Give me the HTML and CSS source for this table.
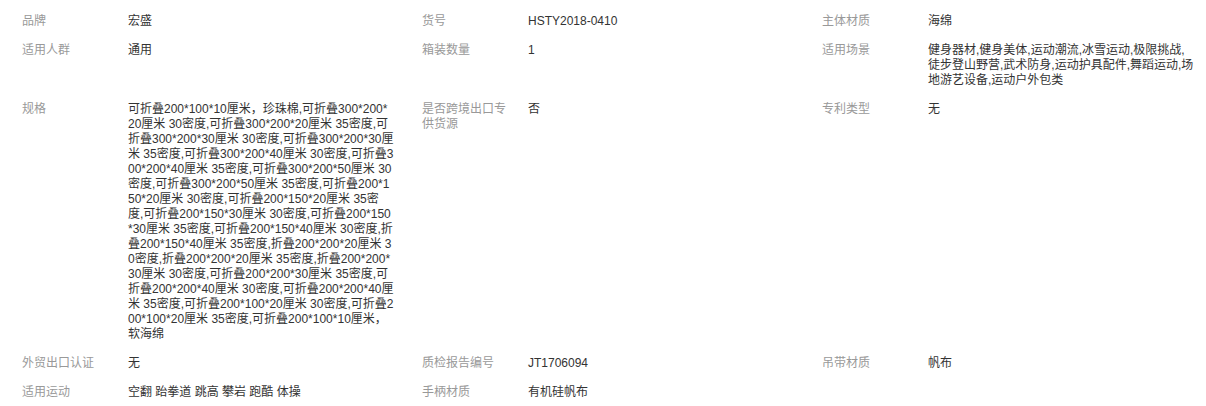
FILE: index.html
```html
<!DOCTYPE html>
<html lang="zh-CN">
<head>
    <meta charset="UTF-8">
    <meta name="viewport" content="width=device-width, initial-scale=1.0">
    <title>商品属性</title>
    <link rel="stylesheet" href="styles.css">
</head>
<body>
    <div class="attr-table">
        <div class="attr-item">
            <div class="attr-name">品牌</div>
            <div class="attr-value">宏盛</div>
        </div>
        <div class="attr-item">
            <div class="attr-name">货号</div>
            <div class="attr-value">HSTY2018-0410</div>
        </div>
        <div class="attr-item">
            <div class="attr-name">主体材质</div>
            <div class="attr-value">海绵</div>
        </div>

        <div class="attr-item">
            <div class="attr-name">适用人群</div>
            <div class="attr-value">通用</div>
        </div>
        <div class="attr-item">
            <div class="attr-name">箱装数量</div>
            <div class="attr-value">1</div>
        </div>
        <div class="attr-item">
            <div class="attr-name">适用场景</div>
            <div class="attr-value">健身器材,健身美体,运动潮流,冰雪运动,极限挑战,徒步登山野营,武术防身,运动护具配件,舞蹈运动,场地游艺设备,运动户外包类</div>
        </div>

        <div class="attr-item">
            <div class="attr-name">规格</div>
            <div class="attr-value">可折叠200*100*10厘米，珍珠棉,可折叠300*200*20厘米 30密度,可折叠300*200*20厘米 35密度,可折叠300*200*30厘米 30密度,可折叠300*200*30厘米 35密度,可折叠300*200*40厘米 30密度,可折叠300*200*40厘米 35密度,可折叠300*200*50厘米 30密度,可折叠300*200*50厘米 35密度,可折叠200*150*20厘米 30密度,可折叠200*150*20厘米 35密度,可折叠200*150*30厘米 30密度,可折叠200*150*30厘米 35密度,可折叠200*150*40厘米 30密度,折叠200*150*40厘米 35密度,折叠200*200*20厘米 30密度,折叠200*200*20厘米 35密度,折叠200*200*30厘米 30密度,可折叠200*200*30厘米 35密度,可折叠200*200*40厘米 30密度,可折叠200*200*40厘米 35密度,可折叠200*100*20厘米 30密度,可折叠200*100*20厘米 35密度,可折叠200*100*10厘米，软海绵</div>
        </div>
        <div class="attr-item">
            <div class="attr-name">是否跨境出口专供货源</div>
            <div class="attr-value">否</div>
        </div>
        <div class="attr-item">
            <div class="attr-name">专利类型</div>
            <div class="attr-value">无</div>
        </div>

        <div class="attr-item">
            <div class="attr-name">外贸出口认证</div>
            <div class="attr-value">无</div>
        </div>
        <div class="attr-item">
            <div class="attr-name">质检报告编号</div>
            <div class="attr-value">JT1706094</div>
        </div>
        <div class="attr-item">
            <div class="attr-name">吊带材质</div>
            <div class="attr-value">帆布</div>
        </div>

        <div class="attr-item">
            <div class="attr-name">适用运动</div>
            <div class="attr-value">空翻 跆拳道 跳高 攀岩 跑酷 体操</div>
        </div>
        <div class="attr-item">
            <div class="attr-name">手柄材质</div>
            <div class="attr-value">有机硅帆布</div>
        </div>
    </div>
</body>
</html>
```

FILE: styles.css
```css
body {
    margin: 0;
    background: #fff;
    font-family: 'Liberation Sans', 'Noto Sans CJK SC', sans-serif;
    font-size: 12px;
    line-height: 15px;
}

.attr-table {
    display: grid;
    grid-template-columns: repeat(3, 400px);
    padding-top: 7px;
}

.attr-item {
    display: flex;
    align-items: flex-start;
    padding: 7px 0 7px 22px;
}

.attr-name {
    width: 90px;
    margin-right: 16px;
    flex-shrink: 0;
    color: #999;
}

.attr-value {
    width: 266px;
    color: #333;
    word-break: break-all;
}
```
